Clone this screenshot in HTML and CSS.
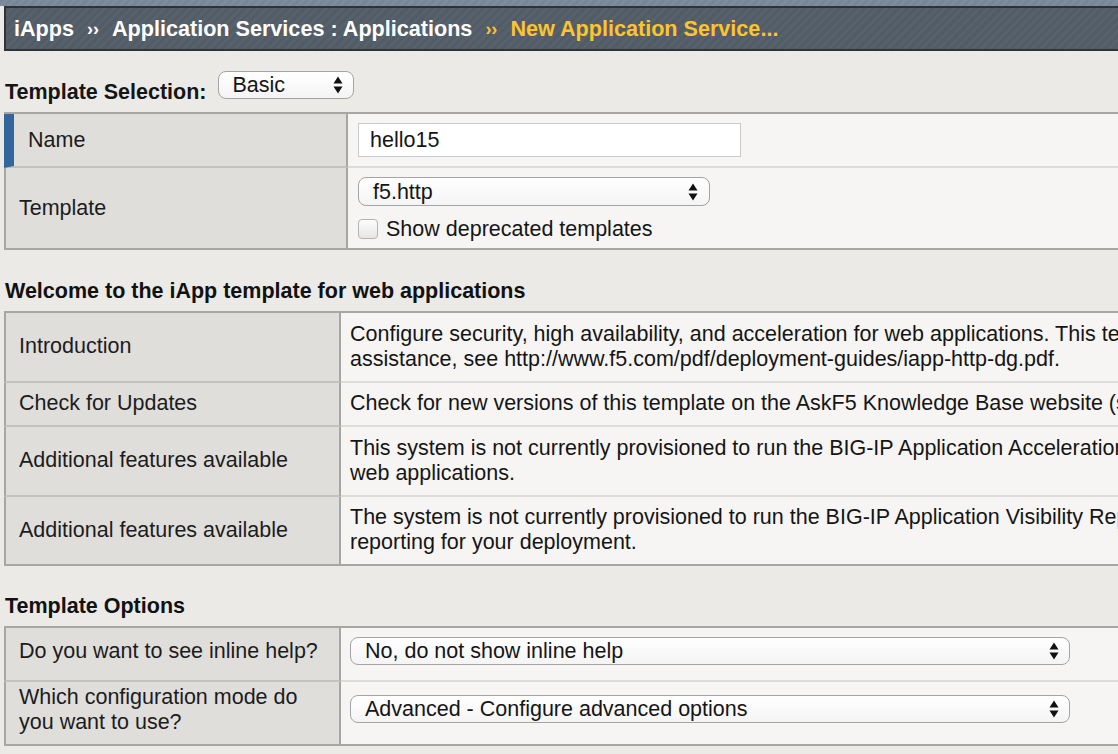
FILE: index.html
```html
<!DOCTYPE html>
<html>
<head>
<meta charset="utf-8">
<title>New Application Service</title>
<link rel="stylesheet" href="styles.css">
</head>
<body>
<div class="topstrip"></div>
<header class="crumbs">
  <span class="crumb">iApps</span>
  <span class="sep">››</span>
  <span class="crumb">Application Services : Applications</span>
  <span class="sep sep-current">››</span>
  <span class="crumb current">New Application Service...</span>
</header>

<div class="sel-row">
  <span class="sel-label">Template Selection:</span>
  <div class="select select-basic">
    <span>Basic</span>
    <svg class="arrows" width="10" height="18" viewBox="0 0 10 18"><path d="M5 0.5 L9.5 7.5 L0.5 7.5 Z M0.5 10.5 L9.5 10.5 L5 17.5 Z" fill="#111"/></svg>
  </div>
</div>

<div class="ftable t1">
  <div class="row">
    <div class="lbl lbl-active">Name</div>
    <div class="val val-t1"><div class="input">hello15</div></div>
  </div>
  <div class="row last">
    <div class="lbl">Template</div>
    <div class="val val-t1">
      <div class="select select-template">
        <span>f5.http</span>
        <svg class="arrows" width="10" height="18" viewBox="0 0 10 18"><path d="M5 0.5 L9.5 7.5 L0.5 7.5 Z M0.5 10.5 L9.5 10.5 L5 17.5 Z" fill="#111"/></svg>
      </div>
      <div class="check-row"><span class="checkbox"></span><span>Show deprecated templates</span></div>
    </div>
  </div>
</div>

<h2 class="section">Welcome to the iApp template for web applications</h2>

<div class="clip">
<div class="ftable t2">
  <div class="row">
    <div class="lbl">Introduction</div>
    <div class="val text">
      <div class="line">Configure security, high availability, and acceleration for web applications. This template creates a complete configuration. For</div>
      <div class="line">assistance, see http://www.f5.com/pdf/deployment-guides/iapp-http-dg.pdf.</div>
    </div>
  </div>
  <div class="row">
    <div class="lbl">Check for Updates</div>
    <div class="val text">
      <div class="line">Check for new versions of this template on the AskF5 Knowledge Base website (support.f5.com).</div>
    </div>
  </div>
  <div class="row">
    <div class="lbl">Additional features available</div>
    <div class="val text">
      <div class="line">This system is not currently provisioned to run the BIG-IP Application Acceleration Manager, which can accelerate your</div>
      <div class="line">web applications.</div>
    </div>
  </div>
  <div class="row last">
    <div class="lbl">Additional features available</div>
    <div class="val text">
      <div class="line">The system is not currently provisioned to run the BIG-IP Application Visibility Reporting module, which provides</div>
      <div class="line">reporting for your deployment.</div>
    </div>
  </div>
</div>
</div>

<h2 class="section">Template Options</h2>

<div class="ftable t3">
  <div class="row">
    <div class="lbl">Do you want to see inline help?</div>
    <div class="val val-opt1">
      <div class="select select-wide">
        <span>No, do not show inline help</span>
        <svg class="arrows" width="10" height="18" viewBox="0 0 10 18"><path d="M5 0.5 L9.5 7.5 L0.5 7.5 Z M0.5 10.5 L9.5 10.5 L5 17.5 Z" fill="#111"/></svg>
      </div>
    </div>
  </div>
  <div class="row last">
    <div class="lbl lbl-multi">Which configuration mode do<br>you want to use?</div>
    <div class="val val-opt2">
      <div class="select select-wide">
        <span>Advanced - Configure advanced options</span>
        <svg class="arrows" width="10" height="18" viewBox="0 0 10 18"><path d="M5 0.5 L9.5 7.5 L0.5 7.5 Z M0.5 10.5 L9.5 10.5 L5 17.5 Z" fill="#111"/></svg>
      </div>
    </div>
  </div>
</div>
</body>
</html>
```

FILE: styles.css
```css
html, body {
  margin: 0;
  padding: 0;
  overflow: hidden;
}

body {
  background: #ebeae6;
  font-family: "Liberation Sans", Arial, Helvetica, sans-serif;
  font-size: 21.5px;
  color: #151515;
  width: 1118px;
  height: 754px;
}

.topstrip {
  height: 6px;
  background: repeating-linear-gradient(135deg, #778797 0 3px, #7d8d9d 3px 6px);
}

.crumbs {
  margin-left: 4px;
  width: 1200px;
  height: 41px;
  border: 2px solid #2f3236;
  border-right: none;
  background: repeating-linear-gradient(135deg, #525c66 0 3px, #57616b 3px 6px);
  display: flex;
  align-items: center;
  padding-left: 8px;
  color: #ffffff;
  font-weight: bold;
  white-space: nowrap;
}

.crumb {
  font-size: 21.6px;
}

.sep {
  font-size: 18px;
  margin: 1px 13px 0 13px;
}

.sep-current,
.current {
  color: #fdc52b;
}

.sel-row {
  height: 41px;
  padding: 20px 0 0 5px;
  display: flex;
  align-items: flex-start;
}

.sel-label {
  font-weight: bold;
  line-height: 24px;
  margin-top: 9px;
  margin-right: 11px;
}

.select {
  box-sizing: border-box;
  display: flex;
  align-items: center;
  justify-content: space-between;
  border: 1px solid #a4a4a4;
  border-radius: 8px;
  background: linear-gradient(#ffffff, #f4f4f4);
  line-height: 24px;
  white-space: nowrap;
}

.select .arrows {
  flex: none;
}

.select-basic {
  width: 136px;
  height: 28px;
  padding: 0 10px 0 14px;
}

.select-template {
  width: 352px;
  height: 29px;
  padding: 0 11px 0 14px;
  margin-bottom: 11px;
}

.select-wide {
  width: 720px;
  height: 28px;
  padding: 0 10px 0 14px;
}

.clip {
  width: 1118px;
  overflow: hidden;
}

.ftable {
  margin-left: 4px;
  width: 1600px;
  border-top: 2px solid #a6a6a4;
  border-bottom: 2px solid #a6a6a4;
}

.row {
  display: grid;
}

.t1 .row {
  grid-template-columns: 344px 1fr;
}

.t2 .row,
.t3 .row {
  grid-template-columns: 337px 1fr;
}

.lbl {
  box-sizing: border-box;
  background: #dfdedb;
  border-left: 2px solid #a6a6a4;
  border-right: 2px solid #a6a6a4;
  border-bottom: 2px solid #c3c2bf;
  padding: 0 13px;
  display: flex;
  align-items: center;
  line-height: 25px;
  white-space: nowrap;
  color: #1c1c1c;
}

.lbl-active {
  border-left: 10px solid #33669a;
  padding-left: 14px;
}

.val {
  background: #f6f5f3;
  border-bottom: 2px solid #dddcd9;
  white-space: nowrap;
}

.row.last .lbl,
.row.last .val {
  border-bottom: none;
}

.val-t1 {
  padding: 9px 10px;
}

.input {
  box-sizing: border-box;
  width: 383px;
  height: 34px;
  border: 1px solid #cacaca;
  background: #ffffff;
  padding-left: 11px;
  display: flex;
  align-items: center;
}

.check-row {
  display: flex;
  align-items: center;
  height: 24px;
  line-height: 24px;
}

.val-t1:has(.check-row) {
  padding-bottom: 7px;
}

.checkbox {
  box-sizing: border-box;
  width: 20px;
  height: 20px;
  border: 1px solid #b3b3b3;
  border-radius: 4px;
  background: linear-gradient(#fdfdfd, #e6e6e6);
  margin-right: 8px;
}

.section {
  margin: 29px 0 8px 5px;
  font-size: 21.5px;
  font-weight: bold;
  line-height: 24px;
  color: #111;
}

.clip + .section {
  margin-top: 28px;
}

.text {
  padding: 8.5px 9px 9px;
  line-height: 25px;
}

.t3 .lbl {
  padding-bottom: 6px;
}

.val-opt1 {
  padding: 9px 9px 15px;
}

.val-opt2 {
  padding: 13px 9px 21px;
}
```
